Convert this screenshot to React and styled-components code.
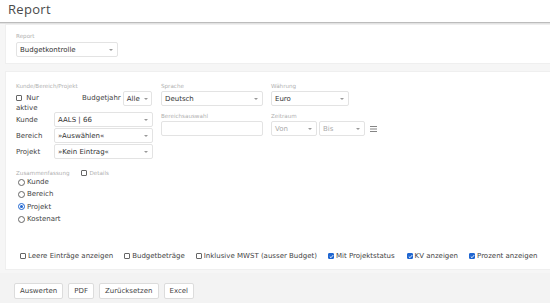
import React from "react";
import styled, { createGlobalStyle } from "styled-components";

const Global = createGlobalStyle`
  html, body { margin: 0; padding: 0; background: #f6f6f6; }
  body { font-family: "DejaVu Sans", "Noto Sans", sans-serif; color: #333; }
  * { box-sizing: border-box; }
`;

const Page = styled.div`
  width: 550px;
  height: 303px;
  overflow: hidden;
  display: flex;
  flex-direction: column;
`;

const Header = styled.div`
  height: 23px;
  background: #fff;
  border-bottom: 1px solid #bcbcbc;
  box-shadow: 0 1px 0 #e2e2e2;
  padding: 0 0 0 8px;
`;

const Title = styled.h1`
  margin: 0;
  font-family: "Open Sans", "Noto Sans", sans-serif;
  font-size: 13px;
  font-weight: 400;
  color: #4a4a4a;
  letter-spacing: 0.3px;
`;

const Card = styled.div`
  margin: ${(p) => p.$mt || 0}px -4px 0 5px;
  background: #fff;
  border: 1px solid #efefef;
  border-right: none;
  padding: ${(p) => p.$pad};
`;

const Label = styled.div`
  font-size: 5.6px;
  color: #b0b0b0;
  line-height: 7px;
  margin-bottom: ${(p) => p.$mb ?? 2}px;
  white-space: nowrap;
`;

const SelectBox = styled.div`
  width: ${(p) => p.$w}px;
  height: 15px;
  border: 1px solid #e3e3e3;
  border-radius: 2px;
  background: #fff;
  display: flex;
  align-items: center;
  justify-content: space-between;
  padding: 0 4px 0 3px;
  font-size: 7px;
  color: ${(p) => (p.$muted ? "#aaa" : "#333")};
  white-space: nowrap;
  &::after {
    content: "";
    border-left: 2px solid transparent;
    border-right: 2px solid transparent;
    border-top: 2.5px solid #999;
    margin-left: 4px;
  }
`;

const Grid = styled.div`
  display: grid;
  grid-template-columns: 137px 102px 110px;
  column-gap: 8px;
  align-items: start;
`;

const Col = styled.div`
  display: flex;
  flex-direction: column;
`;

const TopRow = styled.div`
  display: flex;
  align-items: flex-start;
  height: 21px;
`;

const NurAktive = styled.div`
  width: 66px;
  font-size: 7px;
  line-height: 10px;
  color: #444;
  padding-top: 2px;
`;

const BoxGlyph = styled.span`
  display: inline-block;
  width: ${(p) => p.$s || 6}px;
  height: ${(p) => p.$s || 6}px;
  border: 1px solid ${(p) => (p.$checked ? "#1f66d1" : "#666")};
  border-radius: 1px;
  background: ${(p) => (p.$checked ? "#1f66d1" : "#fff")};
  margin-right: 2px;
  vertical-align: -0.5px;
  position: relative;
  flex: none;
  svg { position: absolute; left: 0; top: 0; }
`;

const InlineLabel = styled.span`
  font-size: 7px;
  color: #444;
  margin-right: 2px;
  padding-top: 3px;
  white-space: nowrap;
`;

const FieldRow = styled.div`
  display: flex;
  align-items: center;
  height: 15px;
  margin-bottom: 1px;
`;

const RowLabel = styled.span`
  width: 38px;
  font-size: 7px;
  color: #444;
`;

const TextInput = styled.div`
  width: 102px;
  height: 15px;
  border: 1px solid #e3e3e3;
  border-radius: 2px;
`;

const Spacer = styled.div`
  height: ${(p) => p.$h}px;
`;

const DateRow = styled.div`
  display: flex;
  align-items: center;
  gap: 2px;
`;

const Summary = styled.div`
  margin-top: 9px;
  display: flex;
  flex-direction: column;
`;

const SummaryHead = styled.div`
  display: flex;
  align-items: center;
  height: 8px;
  margin-bottom: -1px;
`;

const DetailsLabel = styled.span`
  display: flex;
  align-items: center;
  font-size: 5.6px;
  color: #b0b0b0;
  margin-left: 12px;
`;

const RadioRow = styled.label`
  display: flex;
  align-items: center;
  height: 12.3px;
  font-size: 7px;
  color: #444;
  padding-left: 2px;
`;

const RadioDot = styled.span`
  width: 7px;
  height: 7px;
  border-radius: 50%;
  border: 1px solid ${(p) => (p.$checked ? "#1f66d1" : "#666")};
  margin-right: 2px;
  display: flex;
  align-items: center;
  justify-content: center;
  &::after {
    content: "";
    width: 3.5px;
    height: 3.5px;
    border-radius: 50%;
    background: ${(p) => (p.$checked ? "#1f66d1" : "transparent")};
  }
`;

const Options = styled.div`
  display: flex;
  align-items: center;
  margin-top: 27px;
  padding-left: 4px;
`;

const Option = styled.span`
  display: flex;
  align-items: center;
  font-size: 7px;
  color: #444;
  white-space: nowrap;
  margin-right: ${(p) => p.$mr}px;
`;

const Footer = styled.div`
  margin-top: 3px;
  flex: 1;
  background: #f3f3f3;
  display: flex;
  align-items: flex-start;
  gap: 5px;
  padding: 10px 0 0 14px;
`;

const Button = styled.button`
  height: 16px;
  padding: 0 5px;
  background: #fff;
  border: 1px solid #dcdcdc;
  border-radius: 2px;
  font-family: inherit;
  font-size: 7px;
  color: #444;
`;

const Menu = () => (
  <svg width="7" height="6" viewBox="0 0 7 6" style={{ marginLeft: 3 }}>
    <path d="M0 0.5H7M0 3H7M0 5.5H7" stroke="#777" strokeWidth="0.9" />
  </svg>
);

const Check = ({ checked, s }) => (
  <BoxGlyph $checked={checked} $s={s}>
    {checked && (
      <svg width="5" height="5" viewBox="0 0 5 5">
        <path d="M0.8 2.6L2 3.7L4.2 1.1" stroke="#fff" strokeWidth="0.9" fill="none" />
      </svg>
    )}
  </BoxGlyph>
);

const options = [
  ["Leere Einträge anzeigen", false, 11],
  ["Budgetbeträge", false, 11],
  ["Inklusive MWST (ausser Budget)", false, 11],
  ["Mit Projektstatus", true, 12],
  ["KV anzeigen", true, 11],
  ["Prozent anzeigen", true, 0],
];

export default function App() {
  return (
    <Page>
      <Global />
      <Header>
        <Title>Report</Title>
      </Header>
      <Card $mt={1} $pad="8px 10px 6px 10px">
        <Label>Report</Label>
        <SelectBox $w={102}>Budgetkontrolle</SelectBox>
      </Card>
      <Card $mt={7} $pad="11px 10px 9px 10px">
        <Grid>
          <Col>
            <Label $mb={1}>Kunde/Bereich/Projekt</Label>
            <TopRow>
              <NurAktive>
                <Check /> Nur
                <br />
                aktive
              </NurAktive>
              <InlineLabel>Budgetjahr</InlineLabel>
              <SelectBox $w={29}>Alle</SelectBox>
            </TopRow>
            {[
              ["Kunde", "AALS | 66"],
              ["Bereich", "»Auswählen«"],
              ["Projekt", "»Kein Eintrag«"],
            ].map(([l, v]) => (
              <FieldRow key={l}>
                <RowLabel>{l}</RowLabel>
                <SelectBox $w={99}>{v}</SelectBox>
              </FieldRow>
            ))}
          </Col>
          <Col>
            <Label $mb={1}>Sprache</Label>
            <SelectBox $w={102}>Deutsch</SelectBox>
            <Spacer $h={7} />
            <Label $mb={1}>Bereichsauswahl</Label>
            <TextInput />
          </Col>
          <Col>
            <Label $mb={1}>Währung</Label>
            <SelectBox $w={78}>Euro</SelectBox>
            <Spacer $h={7} />
            <Label $mb={1}>Zeitraum</Label>
            <DateRow>
              <SelectBox $w={46} $muted>Von</SelectBox>
              <SelectBox $w={46} $muted>Bis</SelectBox>
              <Menu />
            </DateRow>
          </Col>
        </Grid>
        <Summary>
          <SummaryHead>
            <Label $mb={0}>Zusammenfassung</Label>
            <DetailsLabel>
              <Check s={6} />
              Details
            </DetailsLabel>
          </SummaryHead>
          {["Kunde", "Bereich", "Projekt", "Kostenart"].map((r) => (
            <RadioRow key={r}>
              <RadioDot $checked={r === "Projekt"} />
              {r}
            </RadioRow>
          ))}
        </Summary>
        <Options>
          {options.map(([t, c, mr]) => (
            <Option key={t} $mr={mr}>
              <Check checked={c} />
              {t}
            </Option>
          ))}
        </Options>
      </Card>
      <Footer>
        <Button>Auswerten</Button>
        <Button>PDF</Button>
        <Button>Zurücksetzen</Button>
        <Button>Excel</Button>
      </Footer>
    </Page>
  );
}
